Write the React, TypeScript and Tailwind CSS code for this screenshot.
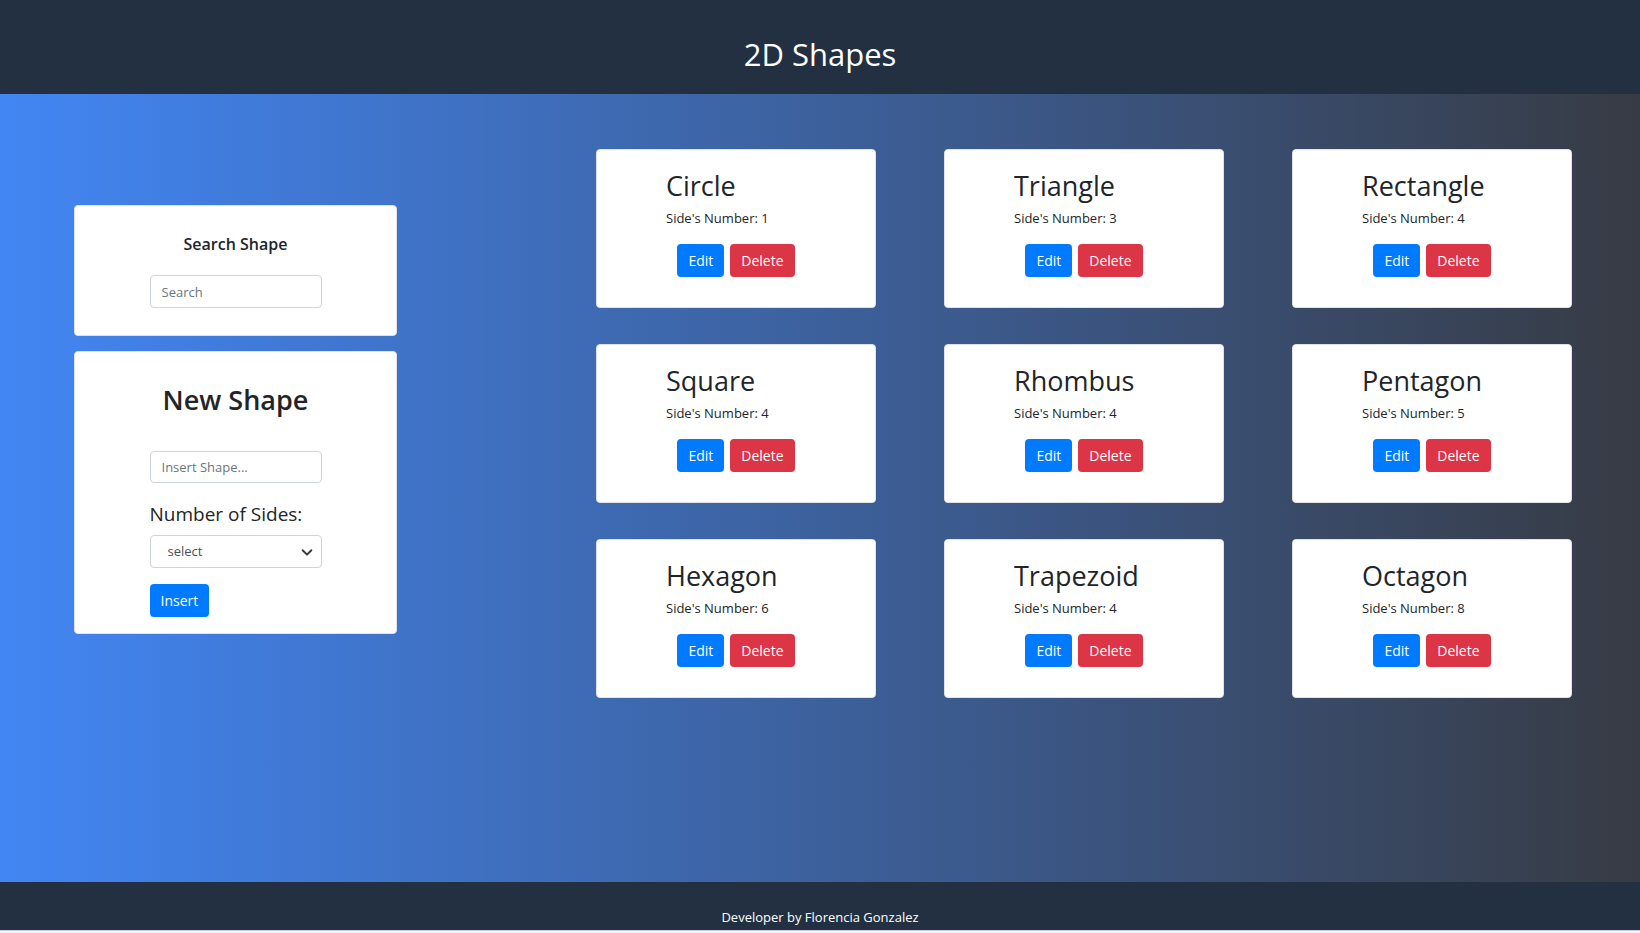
import { useState } from "react";

type Shape = { name: string; sides: number };

const shapes: Shape[] = [
  { name: "Circle", sides: 1 },
  { name: "Triangle", sides: 3 },
  { name: "Rectangle", sides: 4 },
  { name: "Square", sides: 4 },
  { name: "Rhombus", sides: 4 },
  { name: "Pentagon", sides: 5 },
  { name: "Hexagon", sides: 6 },
  { name: "Trapezoid", sides: 4 },
  { name: "Octagon", sides: 8 },
];

const font = "font-['Open_Sans','Noto_Sans',sans-serif]";

function ShapeCard({ shape }: { shape: Shape }) {
  return (
    <div className="h-[159px] bg-white rounded-[4px] border border-[#dfe3e8] px-[69px] pt-[20px]">
      <h2 className="text-[27px] leading-[1.2] font-medium text-[#212529] whitespace-nowrap">{shape.name}</h2>
      <p className="mt-[6px] text-[13px] leading-[21px] text-[#212529] whitespace-nowrap">
        Side's Number: {shape.sides}
      </p>
      <div className="mt-[15px] flex justify-center gap-[6px]">
        <button className="h-[33px] px-[11px] rounded-[4px] bg-[#007bff] text-white text-[14px] leading-none">
          Edit
        </button>
        <button className="h-[33px] px-[11px] rounded-[4px] bg-[#dc3545] text-white text-[14px] leading-none">
          Delete
        </button>
      </div>
    </div>
  );
}

export default function App() {
  const [search, setSearch] = useState("");
  const [name, setName] = useState("");

  return (
    <div className={`min-h-screen flex flex-col bg-white ${font}`}>
      {/* Header */}
      <header className="h-[94px] bg-[#223041] pt-[36px] text-center">
        <h1 className="text-[31px] leading-[1.2] text-white">2D Shapes</h1>
      </header>

      {/* Main */}
      <main className="h-[788px] bg-[linear-gradient(to_right,#4286f4,#373b44)] flex items-start pl-[74px] pt-[55px]">
        <div className="w-[323px] mt-[56px] flex flex-col gap-[15px]">
          <div className="h-[131px] bg-white rounded-[4px] border border-[#dfe3e8] pt-[29px] flex flex-col items-center">
            <h6 className="text-[16px] leading-[1.2] font-semibold text-[#212529]">Search Shape</h6>
            <input
              value={search}
              onChange={(e) => setSearch(e.target.value)}
              placeholder="Search"
              className="mt-[21px] w-[172px] h-[33px] px-[11px] rounded-[4px] border border-[#ced4da] text-[13px] text-[#495057] placeholder:text-[#6c757d] outline-none"
            />
          </div>

          <div className="h-[283px] bg-white rounded-[4px] border border-[#dfe3e8] pt-[32px] flex flex-col items-center">
            <h3 className="text-[27px] leading-[1.2] font-semibold text-[#212529]">New Shape</h3>
            <div className="w-[172px] mt-[35px]">
              <input
                value={name}
                onChange={(e) => setName(e.target.value)}
                placeholder="Insert Shape..."
                className="w-full h-[32px] px-[11px] rounded-[4px] border border-[#ced4da] text-[13px] text-[#495057] placeholder:text-[#6c757d] outline-none"
              />
              <label className="block mt-[16px] text-[19px] leading-[30px] text-[#212529] whitespace-nowrap">
                Number of Sides:
              </label>
              <div className="relative mt-[6px] h-[33px] rounded-[4px] border border-[#ced4da] flex items-center pl-[17px]">
                <span className="text-[13px] text-[#495057]">select</span>
                <svg
                  className="absolute right-[7px] top-1/2 -translate-y-1/2"
                  width="14"
                  height="14"
                  viewBox="0 0 16 16"
                  fill="none"
                  stroke="#343a40"
                  strokeWidth="2.2"
                  strokeLinecap="round"
                  strokeLinejoin="round"
                >
                  <path d="M3 6l5 5 5-5" />
                </svg>
              </div>
              <button className="mt-[16px] h-[33px] px-[11px] rounded-[4px] bg-[#007bff] text-white text-[14px] leading-none">
                Insert
              </button>
            </div>
          </div>
        </div>

        <div className="ml-[199px] grid grid-cols-[280px_280px_280px] gap-x-[68px] gap-y-[36px]">
          {shapes.map((s) => (
            <ShapeCard key={s.name} shape={s} />
          ))}
        </div>
      </main>

      {/* Footer */}
      <footer className="h-[48px] bg-[#223041] pt-[25px] text-center">
        <p className="text-[13px] leading-[21px] text-white">Developer by Florencia Gonzalez</p>
      </footer>
      <div className="h-[3px] bg-[#f4f4f4] border-t border-[#cfcfcf]" />
    </div>
  );
}
